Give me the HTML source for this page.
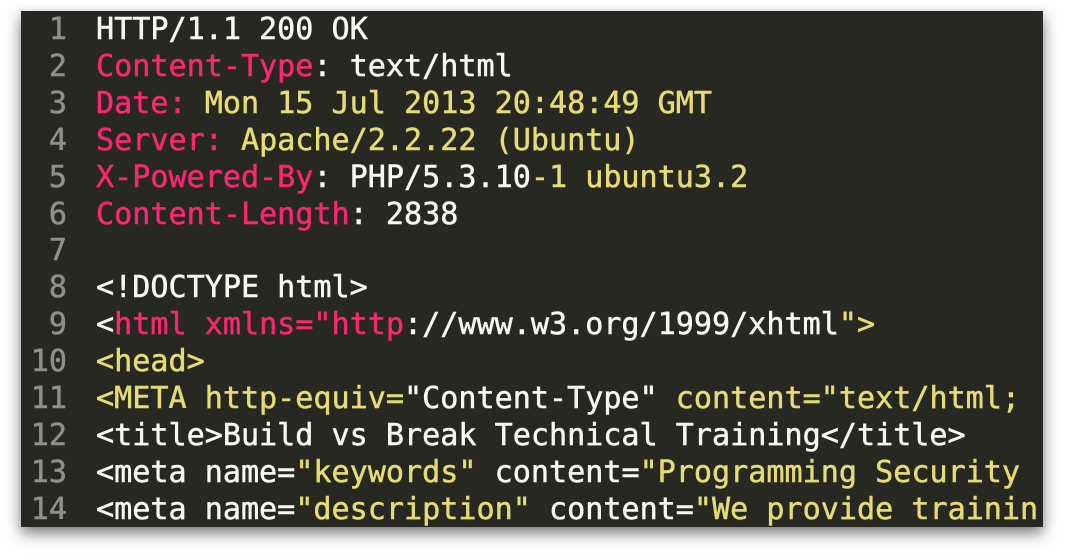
<!DOCTYPE html>
<html><head><style>
body{margin:0;width:1065px;height:560px;background:#fff;overflow:hidden;position:relative}
.box{position:absolute;left:21px;top:11px;width:1022px;height:516px;background:#272822;box-shadow:0 6px 14px rgba(0,0,0,.55);overflow:hidden}
.ln,.code{position:absolute;top:1px;font-family:"DejaVu Sans Mono","Liberation Mono",monospace;font-size:30.1px;line-height:36.9px;white-space:pre;-webkit-text-stroke:0.5px currentColor}
.ln{left:0;width:46px;text-align:right;color:#8f908a}
.code{left:75px;color:#f8f8f2}
.p{color:#f92672}.y{color:#e6db74}
</style></head><body>
<div class="box">
<div class="ln">1
2
3
4
5
6
7
8
9
10
11
12
13
14</div>
<div class="code">HTTP/1.1 200 OK
<span class="p">Content-Type</span>: text/html
<span class="p">Date:</span> <span class="y">Mon 15 Jul 2013 20:48:49 GMT</span>
<span class="p">Server:</span> <span class="y">Apache/2.2.22 (Ubuntu)</span>
<span class="p">X-Powered-By</span>: PHP/5.3.10<span class="y">-1 ubuntu3.2</span>
<span class="p">Content-Length</span>: 2838

&lt;!DOCTYPE html&gt;
&lt;<span class="p">html xmlns="http</span>://www.w3.org/1999/xhtml<span class="y">"&gt;</span>
<span class="y">&lt;head&gt;</span>
<span class="y">&lt;META http-equiv=</span>"Content-Type"<span class="y"> content="text/html;</span>
&lt;title&gt;Build vs Break Technical Training&lt;/title&gt;
&lt;meta name=<span class="y">"keywords"</span> content=<span class="y">"Programming Security</span>
&lt;meta name=<span class="y">"description"</span> content=<span class="y">"We provide trainin</span></div>
</div>
</body></html>
